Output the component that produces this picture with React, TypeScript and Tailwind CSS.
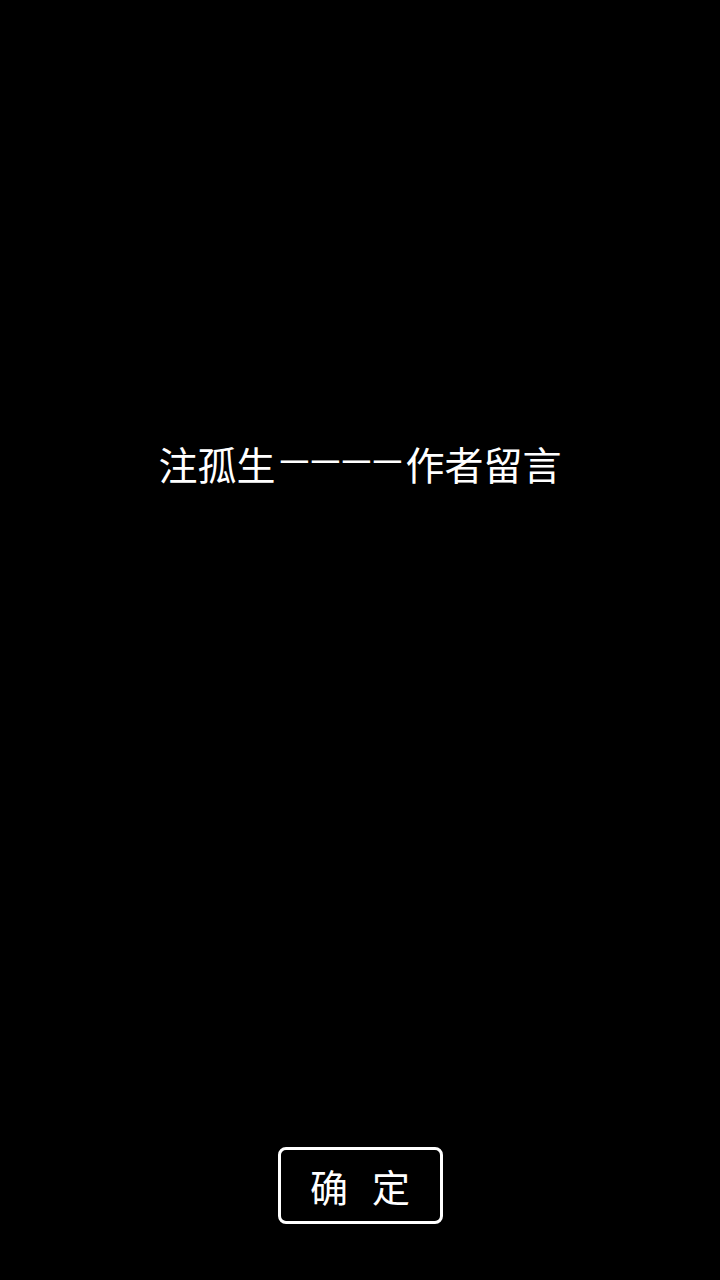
const dashes = ["—", "—", "—", "—"];

export default function App() {
  return (
    <div
      className="flex h-[1280px] w-[720px] flex-col items-center bg-black text-white"
      style={{ fontFamily: '"Noto Sans CJK SC", "Noto Sans", sans-serif' }}
    >
      <div className="mt-[437px] flex items-center text-[39px] leading-[52px]">
        <span>注孤生</span>
        <span className="flex pr-[6px]">
          {dashes.map((d, i) => (
            <span
              key={i}
              className="inline-block w-[31px] -translate-y-[4px] scale-x-[0.7] text-center font-['Liberation_Sans',sans-serif]"
            >
              {d}
            </span>
          ))}
        </span>
        <span>作者留言</span>
      </div>
      <div className="flex-1" />
      <button className="mb-[56px] flex h-[77px] w-[165px] items-center justify-center gap-[24px] rounded-[8px] border-[3px] border-white text-[38px] leading-none">
        <span>确</span>
        <span>定</span>
      </button>
    </div>
  );
}
